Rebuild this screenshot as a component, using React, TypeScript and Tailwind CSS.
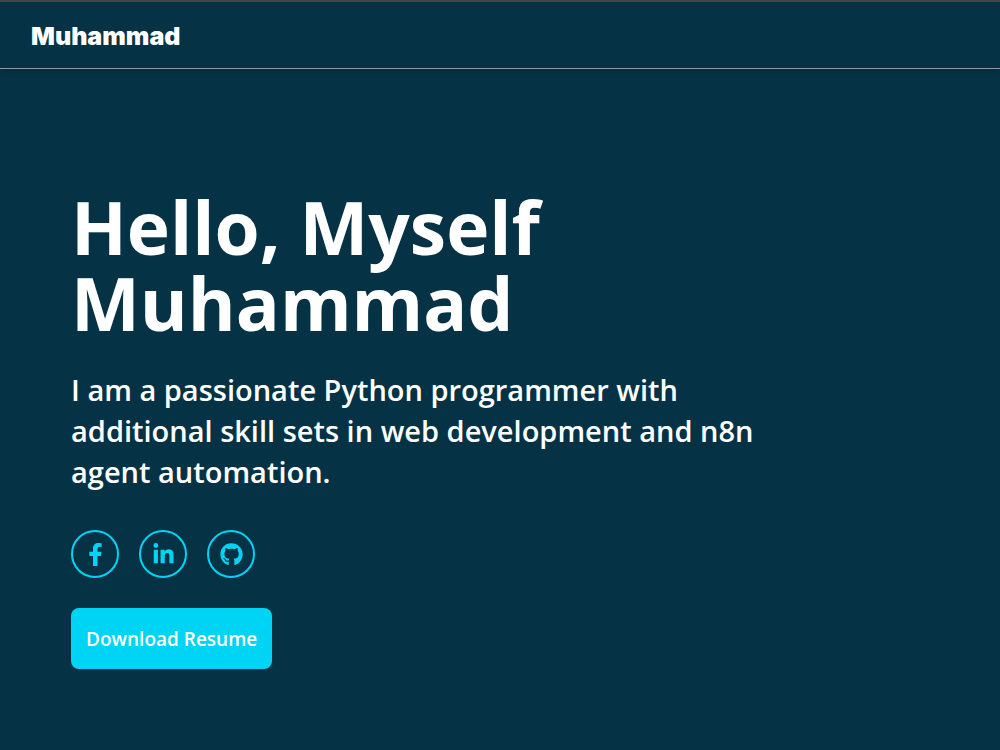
import { FaFacebookF, FaGithub, FaLinkedinIn } from 'react-icons/fa';

const socials = [
  { name: 'Facebook', href: '#facebook', Icon: FaFacebookF },
  { name: 'LinkedIn', href: '#linkedin', Icon: FaLinkedinIn },
  { name: 'GitHub', href: '#github', Icon: FaGithub },
];

function Header() {
  return (
    <header className="h-[69px] px-[31px] flex items-center border-t-2 border-t-[#444444] border-b border-b-[#8d9ba3] shadow-md">
      <a href="#home" className="pt-0.5 text-[25px] leading-8 font-black font-['Inter','Open_Sans',sans-serif]">
        Muhammad
      </a>
    </header>
  );
}

function Hero() {
  return (
    <main id="home" className="px-[71px] pt-[120px] pb-20">
      <h1 className="text-[73px] leading-[76px] font-bold">
        Hello, Myself
        <br />
        Muhammad
      </h1>
      <p className="mt-7 max-w-[700px] text-[29px] leading-[41px] font-semibold">
        I am a passionate Python programmer with additional skill sets in web
        development and n8n agent automation.
      </p>
      <div className="mt-[38px] flex gap-5 text-[#00d4f5]">
        {socials.map(({ name, href, Icon }) => (
          <a
            key={name}
            href={href}
            aria-label={name}
            className="size-12 flex items-center justify-center rounded-full border-2 border-[#00d4f5] hover:bg-[#00d4f5] hover:text-[#053345] transition-colors"
          >
            <Icon className="size-[23px]" />
          </a>
        ))}
      </div>
      <button
        type="button"
        className="mt-[30px] h-[61px] px-[15px] pt-0.5 rounded-lg bg-[#00d4f5] text-[19px] font-semibold cursor-pointer"
      >
        Download Resume
      </button>
    </main>
  );
}

export default function App() {
  return (
    <div className="min-h-screen bg-[#053345] text-white font-['Open_Sans','Noto_Sans',sans-serif]">
      <Header />
      <Hero />
    </div>
  );
}
